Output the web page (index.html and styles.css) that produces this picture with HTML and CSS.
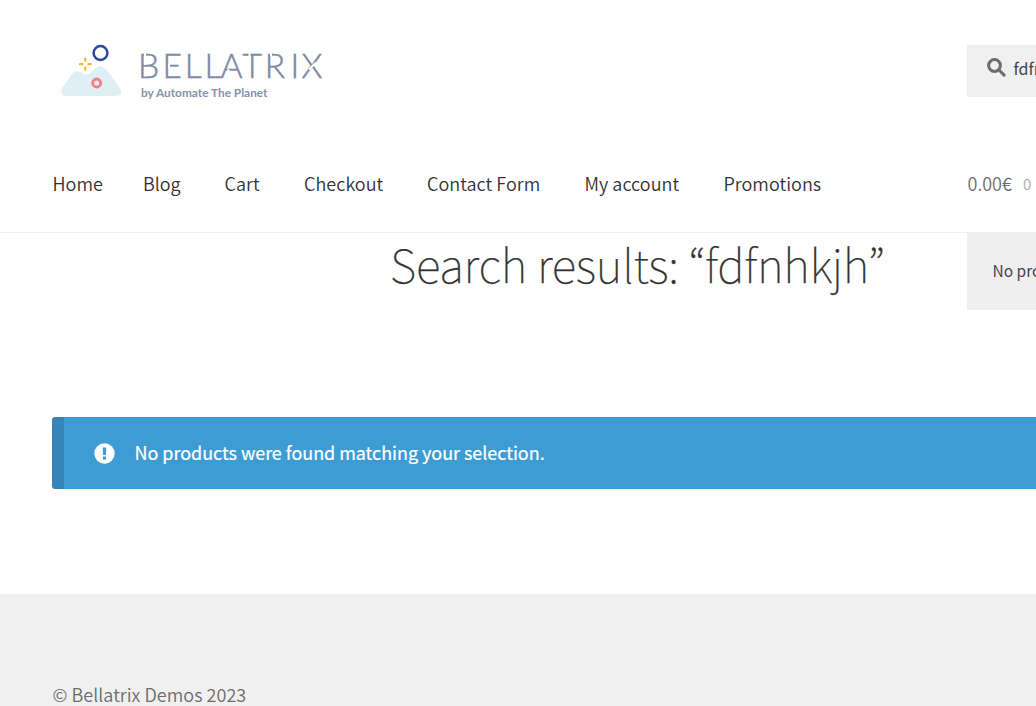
FILE: index.html
```html
<!DOCTYPE html>
<html lang="en">
<head>
<meta charset="utf-8">
<title>Search results – Bellatrix Demos</title>
<link rel="stylesheet" href="styles.css">
</head>
<body>
<header class="site-header">
  <div class="header-top">
    <a class="logo">
      <svg width="275" height="62" viewBox="55 40 275 62" role="img" aria-label="Bellatrix by Automate The Planet">
        <path class="hill" d="M66 96Q59 95 62 88L73 73Q77 69 82 73Q85 76 89 74L96 68Q101 64 106 69Q109 73 120 88Q124 95 116 96Z"/>
        <circle class="ring-blue" cx="100.5" cy="53" r="6.9"/>
        <circle class="ring-red" cx="96.7" cy="83" r="4"/>
        <path class="spark" d="M85.3 58.5v2.2M85.3 67.6v2.2M80 64.2h2.2M88.6 64.2h2.2"/>
        <text class="wordmark" x="138 162.4 184.8 204.6 220.4 242.4 264.8 290.6 301.6" y="77.8">BELLATRIX</text>
        <path class="cut" d="M145 53v12M145 67.5v9M169 64v5M227.5 69.4l3 3M249.5 53v3.5M271 53v3M309 69.5l7-7"/>
        <text class="tagline" x="141" y="96.6" textLength="126.5" lengthAdjust="spacingAndGlyphs">by Automate The Planet</text>
      </svg>
    </a>
    <div class="search">
      <svg class="search-icon" width="19" height="19" viewBox="0 0 19 19"><circle cx="7.5" cy="7.5" r="5.9"/><path d="M11.8 11.8l5.3 5.3"/></svg>
      <span>fdfnhkjh</span>
    </div>
  </div>
  <div class="header-nav">
    <nav class="menu">
      <a class="m-home">Home</a><a class="m-blog">Blog</a><a class="m-cart">Cart</a><a class="m-checkout">Checkout</a><a class="m-contact">Contact Form</a><a class="m-account">My account</a><a class="m-promo">Promotions</a>
    </nav>
    <div class="cart"><span>0.00€</span><small>0</small>
      <div class="mini-cart">No products in the cart.</div>
    </div>
  </div>
</header>
<main class="content">
  <h1 class="title">Search results: “fdfnhkjh”</h1>
  <div class="notice">
    <svg class="notice-icon" width="21" height="21" viewBox="0 0 20 20"><circle cx="10" cy="10" r="9.7"/><path d="M8.3 4.2h3.4l-.4 7.2H8.7zM8.5 12.8h3v2.8h-3z"/></svg>
    <span>No products were found matching your selection.</span>
  </div>
</main>
<footer class="site-footer"><span>© Bellatrix Demos 2023</span></footer>
</body>
</html>
```
FILE: styles.css
```css
* { box-sizing: border-box; }
body {
  margin: 0;
  height: 706px;
  overflow: hidden;
  display: flex;
  flex-direction: column;
  background: #fff;
  color: #6d6d6d;
  font: 400 18px/32px "Noto Sans CJK KR", "Noto Sans", sans-serif;
  white-space: nowrap;
}
.site-header { height: 233px; flex: none; border-bottom: 1px solid #f0f0f0; }
.header-top { height: 128px; padding: 40px 0 0 55px; display: flex; }
.logo { width: 912px; flex: none; }
.logo svg { display: block; }
.hill { fill: #def0f6; }
.ring-blue { fill: none; stroke: #2b4a9b; stroke-width: 2.5; }
.ring-red { fill: none; stroke: #f67c80; stroke-width: 2.8; }
.spark { fill: none; stroke: #f9b233; stroke-width: 2.2; stroke-linecap: round; }
.wordmark { font: 300 33.5px Lato, sans-serif; fill: #8089a2; stroke: #8089a2; stroke-width: .5; }
.cut { fill: none; stroke: #fff; stroke-width: 2; }
.tagline { font: 700 11px Lato, sans-serif; fill: #8790aa; }
.search {
  flex: 1; min-width: 0; overflow: hidden; height: 52px; margin-top: 5px; padding-left: 20px;
  display: flex; align-items: center; gap: 7.5px;
  background: #f0f0f0; color: #43454b; font-size: 16px;
  box-shadow: inset 1px 1px 0 #ebebeb;
}
.search span { margin-top: -6px; }
.search-icon { flex: none; margin-top: -7px; fill: none; stroke: #6d6d6d; stroke-width: 3; stroke-linecap: round; }
.header-nav { display: flex; height: 104px; padding: 39px 0 0 52.5px; }
.menu { width: 915px; flex: none; display: flex; color: #333; font-weight: 350; letter-spacing: .04px; }
.m-home { width: 90.4px; }
.m-blog { width: 81.6px; }
.m-cart { width: 79.5px; }
.m-checkout { width: 123px; }
.m-contact { width: 157.5px; }
.m-account { width: 139px; }
.cart { position: relative; flex: 1; min-width: 0; display: flex; gap: 11px; font-weight: 350; }
.cart small { font-size: 15px; line-height: 34px; opacity: .6; }
.mini-cart {
  position: absolute; left: -.5px; right: 0; top: 66px; height: 77px; overflow: hidden;
  padding: 21px 25.5px; background: #efefef; color: #43454b; font-size: 15.5px; font-weight: 400;
}
.content { height: 361px; flex: none; padding-left: 52px; }
.title {
  margin: 0; height: 184px; padding-left: 338px;
  color: #333; font-size: 46px; line-height: 60px; font-weight: 100;
  letter-spacing: -.23px; -webkit-text-stroke: .25px #333;
}
.notice {
  height: 72px; padding-left: 30px;
  display: flex; align-items: center; gap: 19.5px;
  border-left: 12px solid #3785b7; border-radius: 3px 0 0 3px;
  background: #3d9cd2; color: #fff; font-weight: 400;
  letter-spacing: -.045px; -webkit-text-stroke: .2px #fff;
}
.notice span { margin-top: -2px; }
.notice-icon { fill: #fff; }
.notice-icon path { fill: #3d9cd2; }
.site-footer { flex: 1; padding: 84px 0 0 52.5px; background: #f0f0f0; font-weight: 350; letter-spacing: .04px; }
```
